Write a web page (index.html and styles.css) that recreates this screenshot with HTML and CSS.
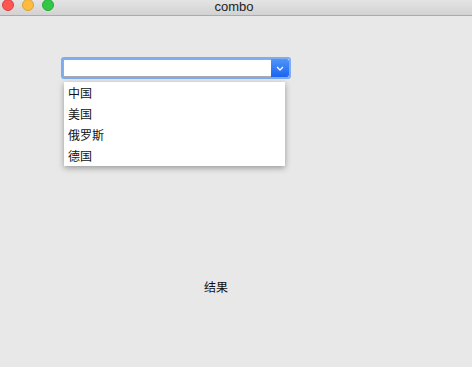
FILE: index.html
```html
<!DOCTYPE html>
<html>
<head>
<meta charset="utf-8">
<link rel="stylesheet" href="styles.css">
</head>
<body>
<div class="window">
  <div class="titlebar">
    <div class="lights">
      <span class="light red"></span>
      <span class="light yellow"></span>
      <span class="light green"></span>
    </div>
    <div class="title">combo</div>
    <div></div>
  </div>
  <div class="content">
    <div class="combo">
      <div class="field">
        <div class="input"></div>
        <div class="btn">
          <svg width="8" height="5" viewBox="0 0 8 5"><path d="M1 1 L4 4 L7 1" fill="none" stroke="#fff" stroke-width="1.3"/></svg>
        </div>
      </div>
      <ul class="menu">
        <li>中国</li>
        <li>美国</li>
        <li>俄罗斯</li>
        <li>德国</li>
      </ul>
    </div>
    <div class="result">结果</div>
  </div>
</div>
</body>
</html>
```
FILE: styles.css
```css
html, body {
  margin: 0;
  padding: 0;
  background: #e8e8e8;
  font-family: "Liberation Sans", "Noto Sans CJK SC", sans-serif;
}
.window {
  width: 472px;
  height: 367px;
  overflow: hidden;
}
.titlebar {
  height: 15px;
  display: grid;
  grid-template-columns: 1fr auto 1fr;
  align-items: center;
  background: linear-gradient(#e4e4e4, #d2d2d2);
  border-bottom: 1px solid #ababab;
}
.lights {
  display: flex;
  gap: 8px;
  padding-left: 2px;
  margin-top: -5px;
}
.light {
  width: 12px;
  height: 12px;
  border-radius: 50%;
  box-sizing: border-box;
}
.red { background: #fc5753; border: 1px solid #df3d39; }
.yellow { background: #fdbc40; border: 1px solid #de9f34; }
.green { background: #33c748; border: 1px solid #27aa35; }
.title {
  font-size: 13px;
  color: #222;
  line-height: 15px;
  margin-top: -3px;
  margin-left: -4px;
}
.content {
  padding: 41px 0 0 61px;
}
.combo {
  position: relative;
  width: 230px;
}
.field {
  display: flex;
  height: 18px;
  border: 2px solid #7eacf0;
  border-radius: 3px;
  background: #fff;
}
.input {
  flex: 1;
  border: 1px solid #a9a9a9;
  border-right: none;
  background: #fff;
}
.btn {
  width: 18px;
  background: linear-gradient(#4f95f9, #1a64f0);
  display: flex;
  align-items: center;
  justify-content: center;
  border-radius: 0 2px 2px 0;
}
.menu {
  position: absolute;
  left: 3px;
  top: 25px;
  width: 221px;
  margin: 0;
  padding: 0;
  list-style: none;
  background: #fff;
  box-shadow: 0 2px 6px rgba(0,0,0,0.35);
}
.menu li {
  height: 21px;
  line-height: 21px;
  padding-left: 4px;
  font-size: 12px;
  color: #111;
  font-family: "Noto Sans CJK SC", sans-serif;
}
.result {
  margin: 199px 0 0 143px;
  font-size: 12px;
  color: #111;
  font-family: "Noto Sans CJK SC", sans-serif;
}
```
